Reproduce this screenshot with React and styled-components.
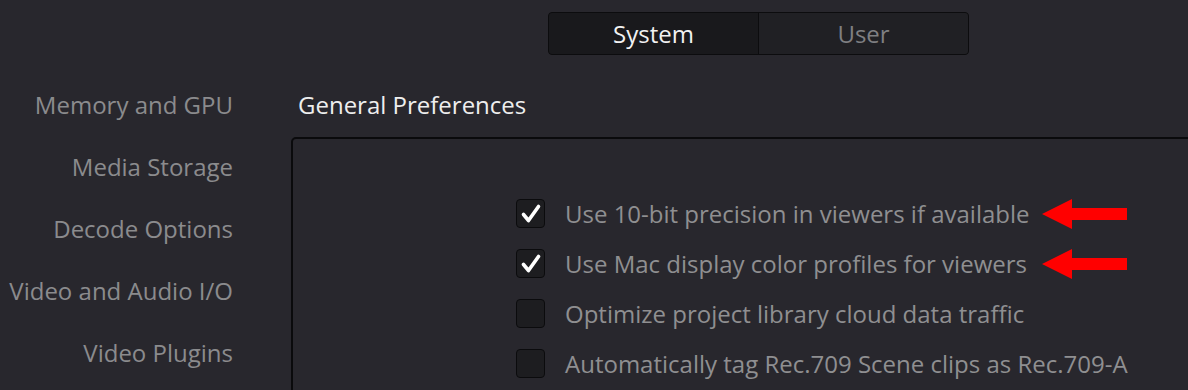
import React from "react";
import styled, { createGlobalStyle } from "styled-components";

const GlobalStyle = createGlobalStyle`
  html, body {
    margin: 0;
    padding: 0;
    background: #28272d;
    overflow: hidden;
  }
  body {
    font-family: "Open Sans", "Noto Sans", sans-serif;
  }
`;

const sections = [
  "Memory and GPU",
  "Media Storage",
  "Decode Options",
  "Video and Audio I/O",
  "Video Plugins",
];

const options = [
  { label: "Use 10-bit precision in viewers if available", checked: true, marked: true },
  { label: "Use Mac display color profiles for viewers", checked: true, marked: true },
  { label: "Optimize project library cloud data traffic", checked: false },
  { label: "Automatically tag Rec.709 Scene clips as Rec.709-A", checked: false },
];

function App() {
  return (
    <>
      <GlobalStyle />
      <Page>
        <TopBar>
          <Tabs>
            <Tab active>System</Tab>
            <Tab>User</Tab>
          </Tabs>
        </TopBar>
        <Body>
          <Sidebar>
            {sections.map((s) => (
              <SideItem key={s}>{s}</SideItem>
            ))}
          </Sidebar>
          <Main>
            <Heading>General Preferences</Heading>
            <Panel>
              {options.map((o) => (
                <Row key={o.label}>
                  <Box>
                    {o.checked && (
                      <svg width="29" height="29" viewBox="0 0 29 29">
                        <path
                          d="M7.5 15.5 L12.5 21.5 L22.5 7.5"
                          fill="none"
                          stroke="#fff"
                          strokeWidth="3.6"
                          strokeLinecap="round"
                          strokeLinejoin="round"
                        />
                      </svg>
                    )}
                  </Box>
                  <Label>{o.label}</Label>
                  {o.marked && (
                    <Arrow width="86" height="32" viewBox="0 0 86 32">
                      <polygon points="0,16 30,1 30,10 85,10 85,22 30,22 30,31" fill="#ff0000" />
                    </Arrow>
                  )}
                </Row>
              ))}
            </Panel>
          </Main>
        </Body>
      </Page>
    </>
  );
}

const Page = styled.div`
  width: 1188px;
  height: 390px;
  overflow: hidden;
  display: flex;
  flex-direction: column;
`;

const TopBar = styled.div`
  display: flex;
  padding: 12px 0 0 548px;
`;

const Tabs = styled.div`
  display: flex;
  width: 421px;
  height: 43px;
  box-sizing: border-box;
  border: 1.5px solid #0c0c0e;
  border-radius: 4px;
  overflow: hidden;
  background: #0c0c0e;
  gap: 1px;
`;

const Tab = styled.div`
  flex: 1;
  display: flex;
  align-items: center;
  justify-content: center;
  font-size: 24px;
  background: ${(p) => (p.active ? "#19191c" : "#202024")};
  color: ${(p) => (p.active ? "#f2f2f2" : "#7f7f82")};
`;

const Body = styled.div`
  display: flex;
  flex: 1;
`;

const Sidebar = styled.div`
  width: 233px;
  flex-shrink: 0;
  padding-top: 19px;
  display: flex;
  flex-direction: column;
  align-items: flex-end;
`;

const SideItem = styled.div`
  height: 62px;
  line-height: 62px;
  font-size: 24px;
  color: #8b8b8d;
  white-space: nowrap;
`;

const Main = styled.div`
  margin-left: 58px;
  flex: 1;
  display: flex;
  flex-direction: column;
`;

const Heading = styled.div`
  padding: 35px 0 0 7px;
  height: 47px;
  line-height: 30px;
  font-size: 24px;
  color: #eeeeee;
`;

const Panel = styled.div`
  position: relative;
  width: 920px;
  height: 400px;
  border: 2px solid #0a0a0c;
  border-radius: 5px;
  padding: 49px 0 0 223px;
  display: flex;
  flex-direction: column;
`;

const Row = styled.div`
  position: relative;
  display: flex;
  align-items: center;
  height: 50px;
  gap: 20px;
`;

const Box = styled.div`
  width: 29px;
  height: 29px;
  box-sizing: border-box;
  border: 1.5px solid #0b0b0d;
  border-radius: 4px;
  background: #1d1d20;
  display: flex;
  align-items: center;
  justify-content: center;
  flex-shrink: 0;
  svg {
    margin: -1.5px;
  }
`;

const Label = styled.span`
  font-size: 24px;
  color: #8f8f91;
  white-space: nowrap;
`;

const Arrow = styled.svg`
  position: absolute;
  left: 526px;
  top: 10px;
`;

export default App;
